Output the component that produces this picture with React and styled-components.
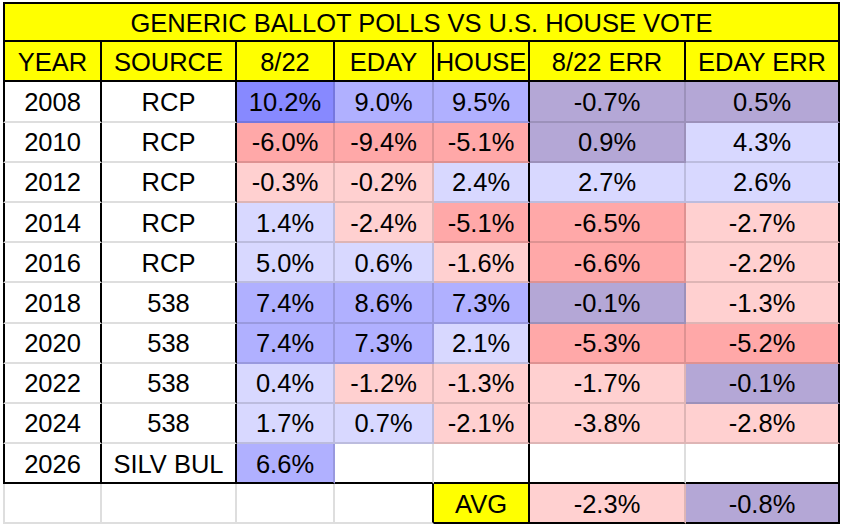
import React from "react";
import styled, { createGlobalStyle } from "styled-components";

const GlobalStyle = createGlobalStyle`
  body {
    margin: 0;
    padding: 2px 0 0 3px;
    background: #ffffff;
    font-family: "Liberation Sans", Arial, sans-serif;
  }
`;

const COLORS = {
  deepBlue: "#8789ff",
  blue: "#b0b0ff",
  lightBlue: "#d8d8ff",
  lightPink: "#ffd0d0",
  pink: "#ffa8a8",
  purple: "#b4a7d6",
  yellow: "#ffff00",
  white: "#ffffff",
};

const LINE = {
  black: "#000000",
  grid: "rgba(0, 0, 0, 0.13)",
};

const Sheet = styled.div`
  display: grid;
  grid-template-columns: 99px 135px 98px 99px 96px 156px 154px;
  grid-auto-rows: 40.2px;
  width: 837px;
`;

const Cell = styled.div`
  box-sizing: border-box;
  display: flex;
  align-items: center;
  justify-content: center;
  padding-top: 2px;
  background: ${(p) => COLORS[p.$bg || "white"]};
  border-right: 2px solid ${(p) => LINE[p.$r || "grid"]};
  border-bottom: 2px solid ${(p) => LINE[p.$b || "grid"]};
  border-left: ${(p) => (p.$l ? `2px solid ${LINE[p.$l]}` : "none")};
  font-size: 25.5px;
  color: #000;
  white-space: nowrap;
  overflow: hidden;
`;

const Title = styled(Cell)`
  grid-column: 1 / -1;
  border-top: 2px solid #000;
  height: 40px;
`;

const HeaderCell = styled(Cell)`
  padding-top: 3px;
`;

const headers = ["YEAR", "SOURCE", "8/22", "EDAY", "HOUSE", "8/22 ERR", "EDAY ERR"];

// [year, source, [value, colour] x5]
const rows = [
  ["2008", "RCP", ["10.2%", "deepBlue"], ["9.0%", "blue"], ["9.5%", "blue"], ["-0.7%", "purple"], ["0.5%", "purple"]],
  ["2010", "RCP", ["-6.0%", "pink"], ["-9.4%", "pink"], ["-5.1%", "pink"], ["0.9%", "purple"], ["4.3%", "lightBlue"]],
  ["2012", "RCP", ["-0.3%", "lightPink"], ["-0.2%", "lightPink"], ["2.4%", "lightBlue"], ["2.7%", "lightBlue"], ["2.6%", "lightBlue"]],
  ["2014", "RCP", ["1.4%", "lightBlue"], ["-2.4%", "lightPink"], ["-5.1%", "pink"], ["-6.5%", "pink"], ["-2.7%", "lightPink"]],
  ["2016", "RCP", ["5.0%", "lightBlue"], ["0.6%", "lightBlue"], ["-1.6%", "lightPink"], ["-6.6%", "pink"], ["-2.2%", "lightPink"]],
  ["2018", "538", ["7.4%", "blue"], ["8.6%", "blue"], ["7.3%", "blue"], ["-0.1%", "purple"], ["-1.3%", "lightPink"]],
  ["2020", "538", ["7.4%", "blue"], ["7.3%", "blue"], ["2.1%", "lightBlue"], ["-5.3%", "pink"], ["-5.2%", "pink"]],
  ["2022", "538", ["0.4%", "lightBlue"], ["-1.2%", "lightPink"], ["-1.3%", "lightPink"], ["-1.7%", "lightPink"], ["-0.1%", "purple"]],
  ["2024", "538", ["1.7%", "lightBlue"], ["0.7%", "lightBlue"], ["-2.1%", "lightPink"], ["-3.8%", "lightPink"], ["-2.8%", "lightPink"]],
  ["2026", "SILV BUL", ["6.6%", "blue"], ["", "white"], ["", "white"], ["", "white"], ["", "white"]],
];

// right border of each column inside the data block
const dataRight = ["black", "black", "grid", "grid", "black", "grid", "black"];

export default function App() {
  return (
    <>
      <GlobalStyle />
      <Sheet>
        <Title $bg="yellow" $r="black" $b="black" $l="black">
          GENERIC BALLOT POLLS VS U.S. HOUSE VOTE
        </Title>

        {headers.map((h, i) => (
          <HeaderCell key={h} $bg="yellow" $r="black" $b="black" $l={i === 0 ? "black" : undefined}>
            {h}
          </HeaderCell>
        ))}

        {rows.map((row, ri) => {
          const last = ri === rows.length - 1;
          const cells = [[row[0], "white"], [row[1], "white"], ...row.slice(2)];
          return cells.map(([text, bg], ci) => (
            <Cell
              key={`${row[0]}-${ci}`}
              $bg={bg}
              $r={dataRight[ci]}
              $b={last ? "black" : "grid"}
              $l={ci === 0 ? "black" : undefined}
            >
              {text}
            </Cell>
          ));
        })}

        {/* summary row */}
        <Cell $l="grid" />
        <Cell />
        <Cell />
        <Cell $r="black" />
        <Cell $bg="yellow" $r="black" $b="black">AVG</Cell>
        <Cell $bg="lightPink" $b="black">-2.3%</Cell>
        <Cell $bg="purple" $r="black" $b="black">-0.8%</Cell>
      </Sheet>
    </>
  );
}
